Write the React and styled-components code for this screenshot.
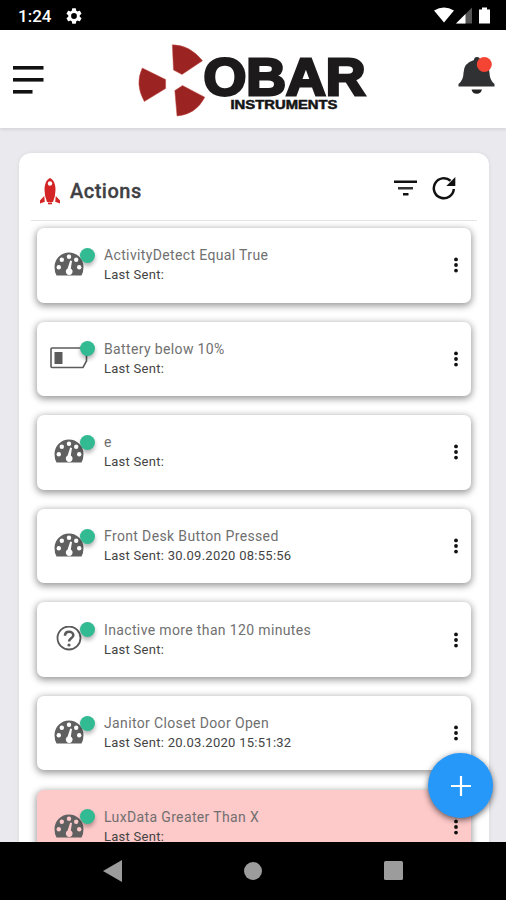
import React from 'react'
import styled, { createGlobalStyle } from 'styled-components'

const GlobalStyle = createGlobalStyle`
    * {
        box-sizing: border-box;
    }
    body {
        margin: 0;
        font-family: Roboto, sans-serif;
        overflow: hidden;
    }
    svg {
        display: block;
        flex-shrink: 0;
    }
`

const Screen = styled.div`
    position: relative;
    display: flex;
    flex-direction: column;
    width: 506px;
    height: 900px;
    overflow: hidden;
    background: #e9e9ee;
`

const StatusBar = styled.div`
    display: flex;
    align-items: center;
    flex: 0 0 30px;
    padding: 2px 14px 0 18px;
    background: #000;
    color: #fff;
`

const Clock = styled.span`
    width: 48px;
    font-size: 17px;
    font-weight: 500;
    line-height: 20px;
`

const StatusIcons = styled.div`
    display: flex;
    margin-left: auto;
`

const Header = styled.header`
    display: flex;
    align-items: center;
    justify-content: space-between;
    flex: 0 0 98px;
    padding: 0 11px 0 13px;
    background: #fff;
    box-shadow: 0 1px 4px rgba(0, 0, 0, 0.12);
    z-index: 1;
`

const Content = styled.main`
    flex: 1;
    min-height: 0;
    padding: 25px 17px 0 19px;
    overflow: hidden;
`

const Panel = styled.section`
    height: 760px;
    padding: 0 12px 0 12px;
    border-radius: 12px;
    background: #fff;
    box-shadow: 0 0 4px rgba(0, 0, 0, 0.08);
`

const PanelHeader = styled.div`
    display: flex;
    align-items: center;
    height: 68px;
    padding: 8px 21px 0 8px;
    border-bottom: 1px solid #e4e4e4;
`

const PanelTitle = styled.h1`
    flex: 1;
    margin: 0 0 0 9px;
    font-size: 20px;
    font-weight: 500;
    letter-spacing: 0.5px;
    color: #3f4043;
    -webkit-text-stroke: 0.3px #3f4043;
`

const Tools = styled.div`
    display: flex;
    align-items: center;
    gap: 15px;
    margin-top: -5px;
`

const List = styled.div`
    display: flex;
    flex-direction: column;
    gap: 19.1px;
    padding: 7px 6px 0;
`

const Card = styled.div`
    display: flex;
    align-items: center;
    flex: 0 0 74.5px;
    height: 74.5px;
    padding: 0 5px 0 13px;
    border-radius: 7px;
    background: ${ ({ $alert }) => $alert ? '#fec9c9' : '#fff' };
    box-shadow: 0 2px 7px 1px rgba(0, 0, 0, 0.4);
`

const IconBox = styled.div`
    position: relative;
    display: flex;
    align-items: center;
    justify-content: center;
    width: 38px;
    height: 40px;
    margin-top: -2px;
`

const Dot = styled.span`
    position: absolute;
    top: 3.5px;
    right: -7px;
    width: 15px;
    height: 15px;
    border-radius: 50%;
    background: #32ba92;
    box-shadow: 0 3px 4px rgba(0, 0, 0, 0.3);
`

const Texts = styled.div`
    flex: 1;
    margin: 0 0 0 16px;
    white-space: nowrap;
`

const Name = styled.div`
    font-size: 14px;
    line-height: 20px;
    letter-spacing: 0.36px;
    color: #707070;
`

const LastSent = styled.div`
    font-size: 13px;
    line-height: 20px;
    letter-spacing: 0.27px;
    color: #444;
`

const Fab = styled.button`
    position: absolute;
    right: 13px;
    top: 753px;
    display: flex;
    align-items: center;
    justify-content: center;
    width: 65px;
    height: 65px;
    padding: 0;
    border: 0;
    border-radius: 50%;
    background: #2698fa;
    box-shadow: 0 2px 6px rgba(0, 0, 0, 0.6);
`

const NavBar = styled.nav`
    display: flex;
    align-items: center;
    justify-content: space-between;
    flex: 0 0 58.5px;
    padding: 0 103px;
    background: #000;
`

//Iconos
const GearIcon = () => (
    <svg width='16' height='16' viewBox='2 2 20 20' fill='#fff'>
        <path d='M19.14 12.94c.04-.3.06-.61.06-.94s-.02-.64-.07-.94l2.03-1.58a.49.49 0 0 0 .12-.61l-1.92-3.32a.49.49 0 0 0-.59-.22l-2.39.96a7 7 0 0 0-1.62-.94l-.36-2.54A.48.48 0 0 0 13.92 2.4h-3.84a.48.48 0 0 0-.47.41l-.36 2.54a7.3 7.3 0 0 0-1.62.94l-2.39-.96a.48.48 0 0 0-.59.22L2.74 8.87a.48.48 0 0 0 .12.61l2.03 1.58a6 6 0 0 0 0 1.88l-2.03 1.58a.49.49 0 0 0-.12.61l1.92 3.32c.12.22.37.29.59.22l2.39-.96c.5.38 1.03.7 1.62.94l.36 2.54c.05.24.24.41.48.41h3.84c.24 0 .44-.17.47-.41l.36-2.54a7 7 0 0 0 1.62-.94l2.39.96c.22.08.47 0 .59-.22l1.92-3.32a.48.48 0 0 0-.12-.61zM12 15.6A3.6 3.6 0 1 1 12 8.4a3.6 3.6 0 0 1 0 7.2' />
    </svg>
)

const SignalIcons = () => (
    <svg width='58' height='18' viewBox='0 0.5 58 18'>
        <path d='M0 4Q10-2 20 4L10 16Z' fill='#fff' />
        <path d='M38 1V17H22Z' fill='#555' />
        <path d='M31.5 7.5V17H22Z' fill='#fff' />
        <path d='M45 3h3V1h5V3h3v14H45z' fill='#fff' />
    </svg>
)

const MenuIcon = () => (
    <svg width='31' height='30' viewBox='0 0 31 30' fill='#111'>
        <rect y='2' width='30.5' height='3.6' />
        <rect y='14' width='30.5' height='3.6' />
        <rect y='26' width='19.5' height='3.6' />
    </svg>
)

const Logo = () => (
    <svg width='232' height='76' viewBox='135 41 232 76' overflow='visible'>
        <g fill='#9b2423' stroke='#c2504b' strokeWidth='0.5'>
            <path d='M172.3 44.8Q190 45 202.5 60.8L182 74.5L173.5 70Z' />
            <path d='M142.3 68L165.6 79.5V88.5L144.3 101.5Q134.5 84 142.3 68Z' />
            <path d='M182.5 85.5L204.8 97.2Q196 114.5 177 116L174.8 90.5Z' />
        </g>
        <text x='203.500' y='94.8' textLength='162' lengthAdjust='spacingAndGlyphs' fontFamily='"Liberation Sans", sans-serif' fontWeight='700' fontSize='51' fill='#1c1a1b' stroke='#1c1a1b' strokeWidth='2.8'>OBAR</text>
        <text x='230.5' y='109.3' textLength='107' lengthAdjust='spacingAndGlyphs' fontFamily='"Liberation Sans", sans-serif' fontWeight='700' fontSize='12' fill='#151515' stroke='#151515' strokeWidth='0.5'>INSTRUMENTS</text>
    </svg>
)

const BellIcon = () => (
    <svg width='37' height='46' viewBox='458 56 37 46'>
        <path d='M474 60Q474 57 477 57T480 60Q489.5 63 489.5 73Q489.5 80 494.5 84V86.5H458.5V84Q463.5 80 463.5 73Q463.5 63 474 60Z' fill='#303133' />
        <path d='M471.5 89.5H482Q481 93.7 476.7 93.7T471.5 89.5Z' fill='#222' />
        <circle cx='484.3' cy='64.5' r='7.5' fill='#f34434' />
    </svg>
)

const RocketIcon = () => (
    <svg width='22' height='28' viewBox='0 0 22 28' fill='#d32526'>
        <path d='M11 1C7.5 2.5 5.5 7 5.5 13Q5.5 19 8 25H14Q16.5 19 16.5 13C16.5 7 14.5 2.5 11 1Z' />
        <path d='M5.2 19L1 23.5V26.5L5.8 24.8ZM16.8 19L21 23.5V26.5L16.2 24.8Z' />
        <rect x='9' y='25.5' width='4' height='1.8' />
        <circle cx='11' cy='6.5' r='2.2' fill='#fff' />
    </svg>
)

const FilterIcon = () => (
    <svg width='23' height='16' viewBox='0 0 23 16' fill='#111'>
        <rect y='0.5' width='23' height='2.5' />
        <rect x='4' y='7' width='15' height='2.5' fill='#333' />
        <rect x='9' y='13' width='5.5' height='2.5' />
    </svg>
)

const RefreshIcon = () => (
    <svg width='24' height='24' viewBox='0 0 24 24'>
        <path d='M21.8 13A10 10 0 1 1 18.5 4.8' fill='none' stroke='#111' strokeWidth='2.5' />
        <path d='M23.3 1V10H14.3Z' fill='#111' />
    </svg>
)

const GaugeIcon = ({ holes }) => (
    <svg width='30' height='26' viewBox='0 0 30 26'>
        <path d='M2.5 24.5Q.5 21 .5 16A14.5 14.5 0 0 1 29.5 16Q29.5 21 27.5 24.5Z' fill='#606060' />
        <g fill={ holes }>
            <circle cx='4.8' cy='16.3' r='2.2' />
            <circle cx='7.8' cy='8.8' r='2.2' />
            <circle cx='15' cy='5.8' r='2.2' />
            <circle cx='22.2' cy='8.8' r='2.2' />
            <circle cx='25.2' cy='16.3' r='2.2' />
            <path d='M16.2 9.5L18 10L16.8 17.5A3.4 3.4 0 1 1 13.6 17.5Z' />
        </g>
    </svg>
)

const BatteryIcon = () => (
    <svg width='38' height='22' viewBox='0 0 38 22'>
        <path d='M1 2Q1 1 2 1H33V5.5H36.5V14L33 20.5H2Q1 20.5 1 19.5Z' fill='none' stroke='#5c5c5c' strokeWidth='1.6' />
        <rect x='4.5' y='5' width='8' height='12' fill='#5c5c5c' />
    </svg>
)

const QuestionIcon = () => (
    <svg width='26' height='26' viewBox='0 0 26 26' fill='none' stroke='#5a5a5a'>
        <circle cx='13' cy='12' r='11.5' strokeWidth='1.8' />
        <path d='M9 9.8C9 4.300 17.300 4.800 17.300 9.300C17.300 12.300 13 12.300 13 15.500' strokeWidth='2.6' />
        <circle cx='13' cy='19' r='1.6' fill='#5a5a5a' stroke='none' />
    </svg>
)

const MoreIcon = () => (
    <svg width='20' height='20' viewBox='0 0 20 20' fill='#111'>
        <circle cx='10' cy='4.4' r='1.9' />
        <circle cx='10' cy='10' r='1.9' />
        <circle cx='10' cy='15.6' r='1.9' />
    </svg>
)

const actions = [
    { name: 'ActivityDetect Equal True', icon: 'gauge' },
    { name: 'Battery below 10%', icon: 'battery' },
    { name: 'e', icon: 'gauge' },
    { name: 'Front Desk Button Pressed', icon: 'gauge', sent: '30.09.2020 08:55:56' },
    { name: 'Inactive more than 120 minutes', icon: 'question' },
    { name: 'Janitor Closet Door Open', icon: 'gauge', sent: '20.03.2020 15:51:32' },
    { name: 'LuxData Greater Than X', icon: 'gauge', alert: true },
]

const ActionCard = ({ name, icon, sent, alert }) => (
    <Card $alert={ alert }>
        <IconBox>
            { icon === 'gauge' && <GaugeIcon holes={ alert ? '#fec9c9' : '#fff' } /> }
            { icon === 'battery' && <BatteryIcon /> }
            { icon === 'question' && <QuestionIcon /> }
            <Dot />
        </IconBox>
        <Texts>
            <Name>{ name }</Name>
            <LastSent>Last Sent: { sent }</LastSent>
        </Texts>
        <MoreIcon />
    </Card>
)

const App = () => {

    return (
        <Screen>
            <GlobalStyle />
            <StatusBar>
                <Clock>1:24</Clock>
                <GearIcon />
                <StatusIcons>
                    <SignalIcons />
                </StatusIcons>
            </StatusBar>
            <Header>
                <MenuIcon />
                <Logo />
                <BellIcon />
            </Header>
            <Content>
                <Panel>
                    <PanelHeader>
                        <RocketIcon />
                        <PanelTitle>Actions</PanelTitle>
                        <Tools>
                            <FilterIcon />
                            <RefreshIcon />
                        </Tools>
                    </PanelHeader>
                    <List>
                        { actions.map(action => <ActionCard key={ action.name } { ...action } />) }
                    </List>
                </Panel>
            </Content>
            <NavBar>
                <svg width='19' height='22' fill='#9c9c9c'><path d='M0 11L19 0V22Z' /></svg>
                <svg width='18' height='18' fill='#9c9c9c'><circle cx='9' cy='9' r='9' /></svg>
                <svg width='19' height='19' fill='#9c9c9c'><rect width='19' height='19' rx='1.5' /></svg>
            </NavBar>
            <Fab aria-label='Add action'>
                <svg width='20' height='20' stroke='#fff' strokeWidth='2.2'><path d='M10 0V20M0 10H20' /></svg>
            </Fab>
        </Screen>
    )
}

export default App
